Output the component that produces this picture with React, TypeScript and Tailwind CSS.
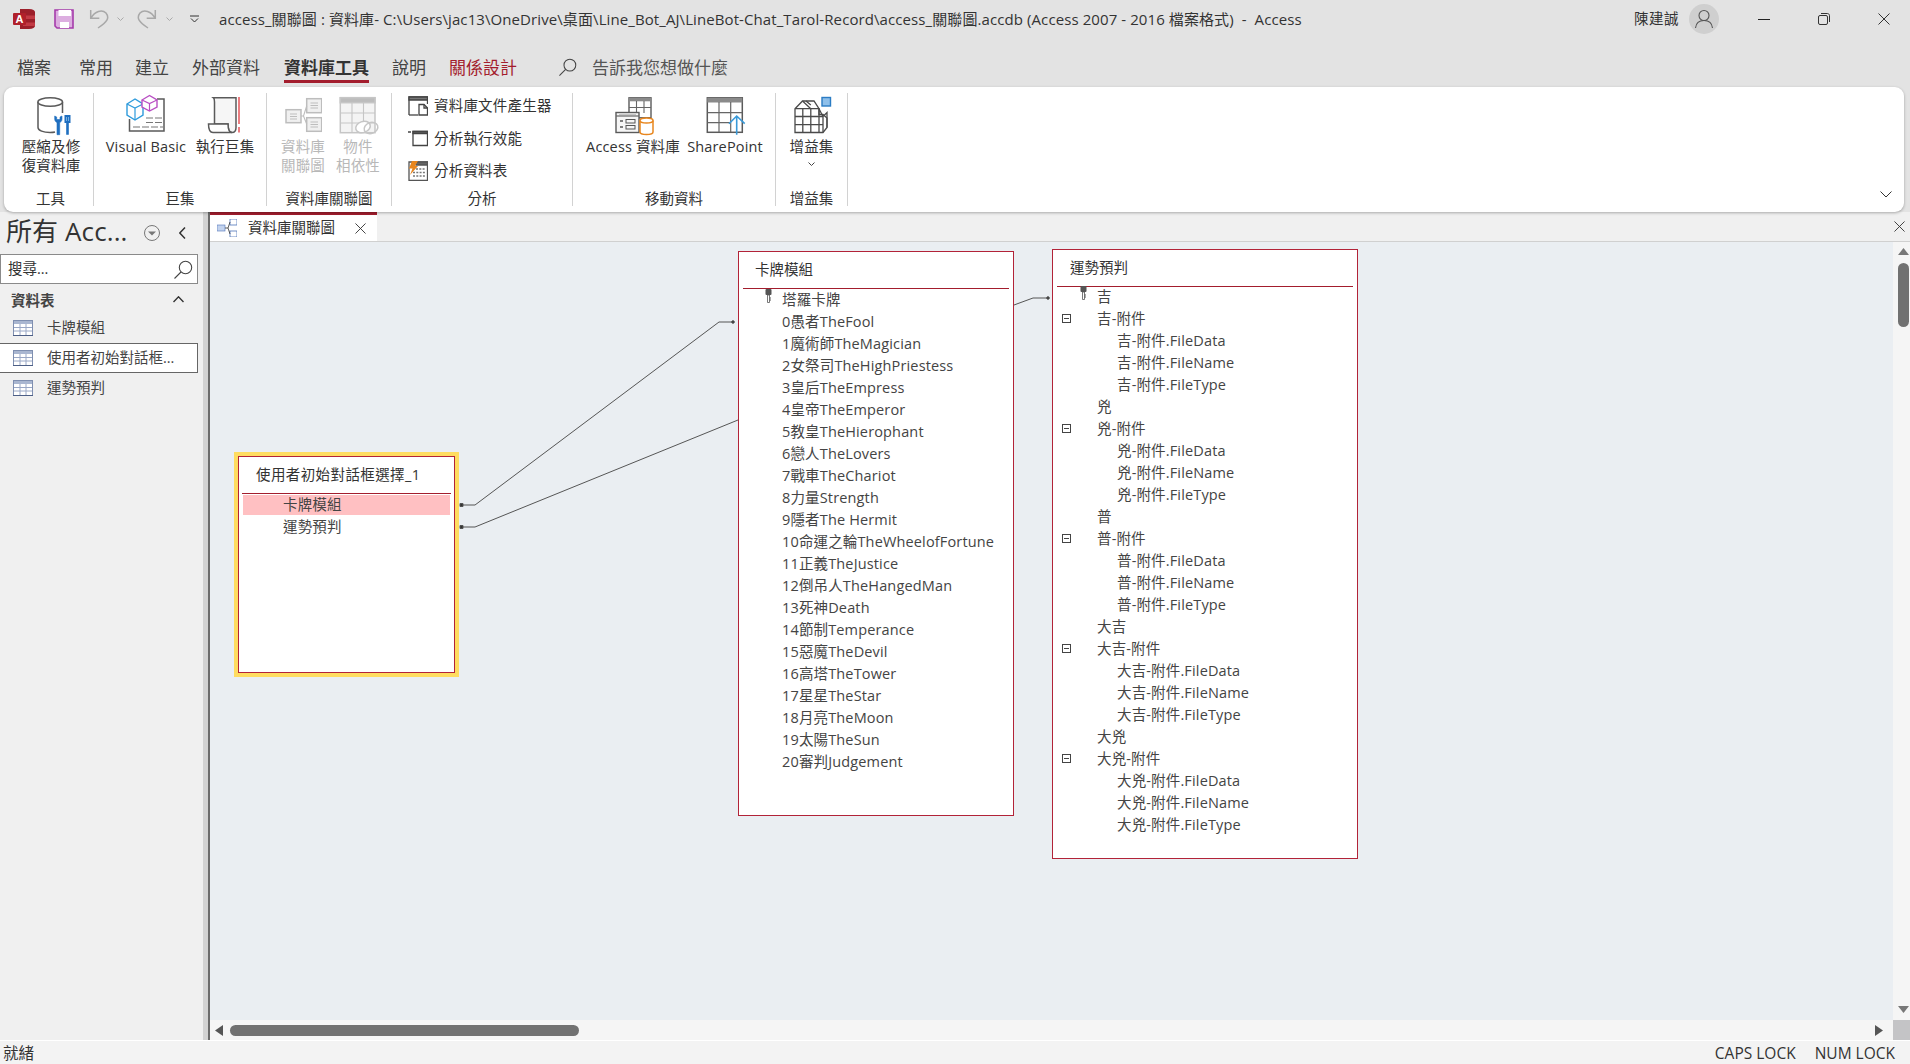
import React from "react";

const FONT = "font-['Open_Sans','Noto_Sans_CJK_TC',sans-serif]";

const cards = [
  "0愚者TheFool",
  "1魔術師TheMagician",
  "2女祭司TheHighPriestess",
  "3皇后TheEmpress",
  "4皇帝TheEmperor",
  "5教皇TheHierophant",
  "6戀人TheLovers",
  "7戰車TheChariot",
  "8力量Strength",
  "9隱者The Hermit",
  "10命運之輪TheWheelofFortune",
  "11正義TheJustice",
  "12倒吊人TheHangedMan",
  "13死神Death",
  "14節制Temperance",
  "15惡魔TheDevil",
  "16高塔TheTower",
  "17星星TheStar",
  "18月亮TheMoon",
  "19太陽TheSun",
  "20審判Judgement",
];

const fortunes = ["吉", "兇", "普", "大吉", "大兇"];

const X = ({ size = 12, color = "#333" }: { size?: number; color?: string }) => (
  <svg width={size} height={size} viewBox="0 0 12 12" fill="none" stroke={color} strokeWidth="1">
    <path d="M0.5 0.5 11.5 11.5M11.5 0.5 0.5 11.5" />
  </svg>
);

const Chevron = ({ d, w = 10, h = 6, color = "#444", sw = 1 }: { d: string; w?: number; h?: number; color?: string; sw?: number }) => (
  <svg width={w} height={h} viewBox={`0 0 ${w} ${h}`} fill="none" stroke={color} strokeWidth={sw}>
    <path d={d} />
  </svg>
);

const Search = ({ size = 20 }: { size?: number }) => (
  <svg width={size} height={size} viewBox="0 0 20 20" fill="none" stroke="#444" strokeWidth="1.1">
    <circle cx="12.5" cy="7.5" r="6.2" />
    <path d="M8 12 1.5 18.5" />
  </svg>
);

const TableIcon = () => (
  <svg width="20" height="16" viewBox="0 0 20 16">
    <rect x="0.5" y="0.5" width="19" height="15" fill="#fff" stroke="#7f8fb0" />
    <rect x="1" y="1" width="18" height="3" fill="#a9b6d0" />
    <path d="M1 7.5H19M1 11H19M7 4V15M13 4V15" stroke="#9aa8c6" fill="none" />
    <path d="M0 15.5H20" stroke="#4d5f86" />
  </svg>
);

const KeyIcon = () => (
  <svg width="7" height="14" viewBox="0 0 7 14">
    <rect x="0.5" y="0" width="6" height="6" rx="1" fill="#555" />
    <path d="M2.5 6V13.5H4.5V6Z" fill="#fff" stroke="#555" strokeWidth="0.8" />
    <path d="M4.5 9H6M4.5 11H6" stroke="#555" />
  </svg>
);

const MinusBox = () => (
  <svg width="9" height="9" viewBox="0 0 9 9" fill="none" stroke="#444">
    <rect x="0.5" y="0.5" width="8" height="8" />
    <path d="M2 4.5H7" />
  </svg>
);

const CompactIcon = () => (
  <svg width="40" height="40" viewBox="0 0 40 40" fill="none" overflow="visible">
    <path d="M7 5V30.500C7 33.500 12.500 35.500 19 35.500C21 35.500 23 35.300 24 35M31.500 5V16" stroke="#5a5a5a" strokeWidth="1.500" />
    <ellipse cx="19.200" cy="5" rx="12.300" ry="4.200" fill="#fff" stroke="#5a5a5a" strokeWidth="1.500" />
    <path d="M23.700 19V22C23.700 24 24.800 25 26 25.500V37.700H28.700V25.500C30 25 31 24 31 22V19L29 20V22.500H25.700V20Z" fill="#1f6fc0" stroke="#1f6fc0" strokeWidth="0.600" />
    <path d="M33.500 18H39.500V26H37.800V37.700H35.200V26H33.500Z" fill="#1f6fc0" />
    <path d="M35.500 20V24M37.500 20V24" stroke="#8cbfe8" strokeWidth="0.800" />
  </svg>
);

const VbIcon = () => (
  <svg width="44" height="40" viewBox="0 0 44 40" fill="none" overflow="visible">
    <path d="M5.500 22V34H40V2H33" stroke="#5a5a5a" strokeWidth="1.500" />
    <path d="M22 21H39M22 25.500H39M9 30H39" stroke="#777" strokeWidth="1.100" strokeDasharray="7 2" />
    <path d="M3 7 11 2 19 7V18L11 23 3 18Z" fill="#fff" stroke="#2e9bdc" strokeWidth="1.400" />
    <path d="M3 7 11 11 19 7M11 11V23" stroke="#2e9bdc" strokeWidth="1.200" />
    <path d="M18 3 25.500 -1.500 33 3V10L25.500 14 18 10Z" fill="#fff" stroke="#b94fc4" strokeWidth="1.400" />
    <path d="M18 3 25.500 6.500 33 3M25.500 6.500V14" stroke="#b94fc4" strokeWidth="1.200" />
  </svg>
);

const MacroIcon = () => (
  <svg width="36" height="40" viewBox="0 0 36 40" fill="none" stroke="#5a5a5a" strokeWidth="1.500" overflow="visible">
    <path d="M6.500 0.800H29V30.500C29 33.500 27.500 35.500 25 35.500C22.500 35.500 21 32.500 21 27H7.500V5C7.500 3 7.500 1.500 6.500 0.800Z" fill="#f6f6f6" />
    <path d="M1.500 27H21C21 32.500 22.500 35.500 25 35.500H6C3 35.500 1.500 33 1.500 27Z" fill="#fff" />
    <path d="M32 0V27M32 30V35.500" stroke="#e0393e" strokeWidth="1.300" />
  </svg>
);

const RelationIcon = () => (
  <svg width="38" height="36" viewBox="0 0 38 36" fill="none" stroke="#bdbdbd" strokeWidth="1.500">
    <rect x="2" y="12.700" width="15" height="13" fill="#f0f0f0" />
    <rect x="22.700" y="1.700" width="15" height="14" fill="#f0f0f0" />
    <rect x="22.700" y="20.700" width="15" height="13.600" fill="#f0f0f0" />
    <path d="M17 19H19.500L22.700 9M19.500 19 22.700 27M6 17H13M6 19.500H13M6 22H13M26.500 6H34M26.500 8.500H34M26.500 11H34M26.500 25H34M26.500 27.500H34M26.500 30H34" strokeWidth="1.100" />
  </svg>
);

const DependIcon = () => (
  <svg width="38" height="36" viewBox="0 0 38 36" fill="none" stroke="#c6c6c6" strokeWidth="1.500" overflow="visible">
    <rect x="1.300" y="0.700" width="34.700" height="35" fill="#f4f4f4" />
    <rect x="1.300" y="0.700" width="34.700" height="5" fill="#bcbcbc" />
    <path d="M13 5V35.700M24.500 5V35.700M1.300 16H36M1.300 26H36" strokeWidth="1.100" />
    <ellipse cx="24" cy="30" rx="7.500" ry="5.500" fill="#fff" transform="rotate(-20 24 30)" />
    <ellipse cx="32" cy="31" rx="7" ry="5.500" fill="none" transform="rotate(-20 32 31)" />
  </svg>
);

const AccessDbIcon = () => (
  <svg width="44" height="40" viewBox="0 0 44 40" fill="none" overflow="visible">
    <rect x="18" y="0.800" width="22" height="20" fill="#fff" stroke="#5a5a5a" strokeWidth="1.400" />
    <rect x="18" y="0.800" width="22" height="3.500" fill="#8a8a8a" />
    <path d="M25.500 4V16M33 4V16M18 10.500H40" stroke="#666" strokeWidth="1.100" />
    <rect x="5" y="15.500" width="23" height="20" fill="#f6f6f6" stroke="#5a5a5a" strokeWidth="1.400" />
    <path d="M5 19H28" stroke="#666" strokeWidth="1.200" />
    <path d="M8 18H25" stroke="#999" />
    <path d="M9 24H12M9 30H12" stroke="#555" strokeWidth="1.300" />
    <rect x="15" y="22.500" width="9" height="3.500" stroke="#555" />
    <rect x="15" y="28.500" width="9" height="3.500" stroke="#555" />
    <path d="M29 23.500V35C29 36.700 32 37.500 35.500 37.500S42 36.700 42 35V23.500" fill="#fff" stroke="#e8861e" strokeWidth="1.500" />
    <ellipse cx="35.500" cy="23.500" rx="6.500" ry="2.500" fill="#fff" stroke="#e8861e" strokeWidth="1.500" />
  </svg>
);

const SharePointIcon = () => (
  <svg width="38" height="40" viewBox="0 0 38 40" fill="none" overflow="visible">
    <rect x="1.300" y="0.800" width="35" height="34.500" fill="#fff" stroke="#5a5a5a" strokeWidth="1.500" />
    <rect x="1.300" y="0.800" width="35" height="4.700" fill="#8a8a8a" />
    <path d="M13 5V35M24.700 5V35M1.300 15.700H36M1.300 25.700H24" stroke="#666" strokeWidth="1.200" />
    <path d="M30.700 37.700V19M23 26.700 30.700 19 38.700 26.700" stroke="#3a9ad9" strokeWidth="1.600" fill="none" />
  </svg>
);

const AddinIcon = () => (
  <svg width="40" height="40" viewBox="0 0 40 40" fill="none" stroke="#4a4a4a" strokeWidth="1.300" overflow="visible">
    <rect x="30" y="0.500" width="8.500" height="8.500" fill="#8fc0ea" stroke="#2b7cc4" strokeWidth="1.400" />
    <path d="M3 11.700 10.500 4H22L27 11.700V17.500H31L35 21V30.500L31 35.500H3Z" fill="#fff" />
    <path d="M3 11.700H27V35.500M3 19.500H31V35.500M3 27.600H31M10.800 11.700V35.500M18.800 11.700V35.500M10.500 4 18.800 11.700M14 4 18.800 8M27 11.700 31 19.500M31 19.500 35 15.500V30.500" />
  </svg>
);

const DocGenIcon = () => (
  <svg width="20" height="20" viewBox="0 0 20 20" fill="none" stroke="#444" strokeWidth="1.300">
    <path d="M1 19V1H19.500V8" />
    <path d="M1 19H10" />
    <path d="M1 1H19.500V4H1Z" fill="#777" />
    <path d="M11 8.500H16L19.500 12V19H11Z" fill="#fff" />
    <path d="M16 8.500V12H19.500" />
  </svg>
);

const PerfIcon = () => (
  <svg width="20" height="20" viewBox="0 0 20 20" fill="none" stroke="#444" strokeWidth="1.300">
    <path d="M5 2.500H19.500V16.500H5Z" />
    <path d="M5 2.500H19.500V4.500H5Z" fill="#666" />
    <path d="M0 3H3" strokeWidth="1.500" />
  </svg>
);

const AnalyzeIcon = () => (
  <svg width="20" height="20" viewBox="0 0 20 20" fill="none" stroke="#555" strokeWidth="1.300">
    <path d="M1 1H19.500V19.500H1Z" fill="#fff" />
    <path d="M8 1H19.500V4H8Z" fill="#666" />
    <path d="M8 8H17.500M5 11.500H17.500M5 15H17.500" strokeWidth="1.600" strokeDasharray="2 1.300" stroke="#777" />
    <path d="M4 0H10L7 5H10L2 14 4.500 7.500H1Z" fill="#e8861e" stroke="none" />
  </svg>
);

const RelTabIcon = () => (
  <svg width="20" height="18" viewBox="0 0 20 18" fill="none">
    <rect x="0" y="6" width="8" height="6" fill="#c3d3ee" stroke="#4f74b8" strokeWidth="0.6" />
    <rect x="13" y="0" width="7" height="6" fill="#fff" stroke="#4f74b8" strokeWidth="0.8" />
    <rect x="13" y="12" width="7" height="6" fill="#fff" stroke="#4f74b8" strokeWidth="0.8" />
    <path d="M8 9H11L13 3M11 9 13 15" stroke="#333" strokeWidth="0.8" />
  </svg>
);

const BigButton = ({ icon, lines, w, muted }: { icon: React.ReactNode; lines: string[]; w: string; muted?: boolean }) => (
  <div className={`flex flex-col items-center ${w}`}>
    <div className="h-[40px] mt-[4px] flex items-start justify-center">{icon}</div>
    {lines.map((l) => (
      <div key={l} className={`whitespace-nowrap text-[14.5px] tracking-[0.15px] leading-[19px] ${muted ? "text-[#b8b8b8]" : "text-[#333]"}`}>
        {l}
      </div>
    ))}
  </div>
);

const SmallButton = ({ icon, label }: { icon: React.ReactNode; label: string }) => (
  <div className="flex items-center h-[26px]">
    <div className="w-[26px] flex items-center">{icon}</div>
    <span className="text-[14.5px] tracking-[0.2px] text-[#333] whitespace-nowrap">{label}</span>
  </div>
);

const Group = ({ label, w, pad, gap, lp, children }: { label: string; w: string; pad?: string; gap?: string; lp?: string; children: React.ReactNode }) => (
  <div className={`${w} h-full flex flex-col border-r border-[#d2d2d2]`}>
    <div className={`flex-1 flex ${pad ?? ""} ${gap ?? ""}`}>{children}</div>
    <div className={`h-[12px] mb-[1px] leading-[12px] text-center text-[14.5px] text-[#333] whitespace-nowrap ${lp ?? ""}`}>{label}</div>
  </div>
);

const Row = ({ text, indent, selected, minus, keyed, outer }: { text: string; indent: string; selected?: boolean; minus?: string; keyed?: string; outer?: string }) => (
  <div className={`relative h-[22px] py-[1px] ${outer ?? ""}`}>
    <div className={`h-[20px] leading-[20px] text-[14.500px] tracking-[0.15px] text-[#444] whitespace-nowrap ${indent} ${selected ? "bg-[#ffc0c2]" : ""}`}>
      {keyed && <div className={`absolute top-[0px] ${keyed}`}><KeyIcon /></div>}
      {minus && <div className={`absolute top-[6px] ${minus}`}><MinusBox /></div>}
      {text}
    </div>
  </div>
);

const Title = ({ text, pad }: { text: string; pad: string }) => (
  <div className={`h-[36px] flex items-center text-[14.500px] text-[#333] whitespace-nowrap ${pad}`}>{text}</div>
);

const Status = ({ children }: { children: React.ReactNode }) => <span className="text-[15.5px] text-[#333]">{children}</span>;

export default function App() {
  return (
    <div className={`w-[1910px] h-[1064px] overflow-hidden flex flex-col bg-[#e3e3e3] ${FONT}`}>
      {/* title bar */}
      <div className="h-[38px] flex items-center text-[#333] text-[15px]">
        <svg className="ml-[13px]" width="22" height="20" viewBox="0 0 22 20">
          <path d="M7 0H16C20 0 22 1.500 22 3V17C22 18.500 20 20 16 20H7Z" fill="#9c1f2a" />
          <path d="M10 6.500H22V10H10ZM10 13.500H22V17H10Z" fill="#c23a44" />
          <rect x="0" y="4" width="13" height="12" rx="1" fill="#b0202b" />
          <text x="2.500" y="14" fontSize="11" fontWeight="700" fill="#fff" fontFamily="Liberation Sans">A</text>
        </svg>
        <svg className="ml-[19px]" width="20" height="20" viewBox="0 0 20 20" fill="none">
          <path d="M1 1H19V19H3L1 17Z" fill="#dcaee0" stroke="#a53bab" strokeWidth="1.600" />
          <rect x="4.500" y="1" width="12.500" height="6" fill="#fff" />
          <rect x="6" y="13" width="9" height="6" fill="#fff" />
        </svg>
        <svg className="ml-[15px]" width="20" height="20" viewBox="0 0 20 20" fill="none" stroke="#a8a8a8" strokeWidth="1.500">
          <path d="M1.700 1V9.300H10.300M1.700 9.300C6 2 13 0 17 4C21 9 18 13 9 19" />
        </svg>
        <div className="ml-[8px]"><Chevron d="M0.500 0.500 3.500 3.500 6.500 0.500" w={7} h={4} color="#aaa" /></div>
        <svg className="ml-[13px]" width="20" height="20" viewBox="0 0 20 20" fill="none" stroke="#a8a8a8" strokeWidth="1.500">
          <path d="M18.300 1V9.300H9.700M18.300 9.300C14 2 7 0 3 4C-1 9 2 13 11 19" />
        </svg>
        <div className="ml-[9px]"><Chevron d="M0.500 0.500 3.500 3.500 6.500 0.500" w={7} h={4} color="#aaa" /></div>
        <svg className="ml-[17px]" width="9" height="9" viewBox="0 0 9 9" fill="none" stroke="#333">
          <path d="M0 1H9M1 3.500 4.500 7 8 3.500" />
        </svg>
        <div className="ml-[20px] whitespace-nowrap tracking-[0.09px]">
          access_關聯圖 : 資料庫- C:\Users\jac13\OneDrive\桌面\Line_Bot_AJ\LineBot-Chat_Tarol-Record\access_關聯圖.accdb (Access 2007 - 2016 檔案格式)&nbsp; -&nbsp; Access
        </div>
        <div className="ml-auto flex items-center">
          <span className="text-[14.500px] tracking-[0.5px]">陳建誠</span>
          <div className="ml-[10px] w-[30px] h-[30px] rounded-full bg-[#cfcfcf] flex items-center justify-center">
            <svg width="20" height="20" viewBox="0 0 20 20" fill="none" stroke="#555" strokeWidth="1.100">
              <circle cx="10" cy="6.500" r="5" />
              <path d="M1.500 19C2 14 5 11.500 10 11.500S18 14 18.500 19" />
            </svg>
          </div>
          <div className="ml-[39px] w-[12px] h-[1px] bg-[#222]" />
          <svg className="ml-[48px]" width="12" height="12" viewBox="0 0 12 12" fill="none" stroke="#333">
            <rect x="0.500" y="2.500" width="9" height="9" rx="1.500" />
            <path d="M3 0.500H9.500C10.500 0.500 11.500 1.500 11.500 2.500V9" />
          </svg>
          <div className="ml-[48px] mr-[20px]"><X /></div>
        </div>
      </div>

      {/* tabs */}
      <div className="h-[49px] flex text-[17px] text-[#444] pt-[18px] relative">
        <span className="ml-[17px] h-[24px] leading-[24px]">檔案</span>
        <span className="ml-[28px] h-[24px] leading-[24px]">常用</span>
        <span className="ml-[22px] h-[24px] leading-[24px]">建立</span>
        <span className="ml-[23px] h-[24px] leading-[24px]">外部資料</span>
        <span className="ml-[24px] h-[27px] leading-[24px] font-bold text-[#333] border-b-[3px] border-[#a31d2d]">資料庫工具</span>
        <span className="ml-[23px] h-[24px] leading-[24px]">說明</span>
        <span className="ml-[23px] h-[24px] leading-[24px] text-[#a31d2d]">關係設計</span>
        <span className="ml-[41px] mt-[2px]"><Search size={19} /></span>
        <span className="ml-[15px] h-[24px] leading-[24px] text-[#555]">告訴我您想做什麼</span>
      </div>

      {/* ribbon */}
      <div className="h-[125px] mx-[4px] mr-[6px] bg-white rounded-[9px] shadow-[0_1px_3px_rgba(0,0,0,0.3)] relative z-10 py-[6px] flex">
        <Group label="工具" w="w-[90px]" pad="pl-[15px]" lp="pl-[4px]">
          <BigButton icon={<CompactIcon />} lines={["壓縮及修", "復資料庫"]} w="w-[64px]" />
        </Group>
        <Group label="巨集" w="w-[173px]" pad="pl-[9px]" gap="gap-[4px]">
          <BigButton icon={<VbIcon />} lines={["Visual Basic"]} w="w-[86px]" />
          <BigButton icon={<MacroIcon />} lines={["執行巨集"]} w="w-[64px]" />
        </Group>
        <Group label="資料庫關聯圖" w="w-[125px]" pad="pl-[12px]" gap="gap-[7px]">
          <BigButton icon={<RelationIcon />} lines={["資料庫", "關聯圖"]} w="w-[48px]" muted />
          <BigButton icon={<DependIcon />} lines={["物件", "相依性"]} w="w-[48px]" muted />
        </Group>
        <Group label="分析" w="w-[181px]" pad="pl-[16px]">
          <div className="flex flex-col gap-[6.500px]">
            <SmallButton icon={<DocGenIcon />} label="資料庫文件產生器" />
            <SmallButton icon={<PerfIcon />} label="分析執行效能" />
            <SmallButton icon={<AnalyzeIcon />} label="分析資料表" />
          </div>
        </Group>
        <Group label="移動資料" w="w-[203px]" pad="pl-[12px]" gap="gap-[4px]">
          <BigButton icon={<AccessDbIcon />} lines={["Access 資料庫"]} w="w-[96px]" />
          <BigButton icon={<SharePointIcon />} lines={["SharePoint"]} w="w-[80px]" />
        </Group>
        <Group label="增益集" w="w-[72px]">
          <div className="w-full flex flex-col items-center">
            <BigButton icon={<AddinIcon />} lines={["增益集"]} w="w-[72px]" />
            <div className="mt-[6px]"><Chevron d="M0.500 0.500 3.500 3.500 6.500 0.500" w={7} h={4} color="#444" /></div>
          </div>
        </Group>
        <div className="absolute right-[12px] bottom-[14px]">
          <Chevron d="M0.500 0.500 6 6 11.500 0.500" w={12} h={7} color="#333" />
        </div>
      </div>

      {/* main */}
      <div className="h-[828px] flex bg-[#f0f0f0]">
        {/* nav pane */}
        <div className="w-[203px] flex flex-col">
          <div className="h-[42px] flex items-center text-[#333]">
            <span className="ml-[6px] -mt-[4px] text-[26px] tracking-[0.1px] whitespace-nowrap">所有 Acc...</span>
            <svg className="ml-auto" width="16" height="16" viewBox="0 0 16 16">
              <circle cx="8" cy="8" r="7.500" fill="none" stroke="#777" />
              <path d="M4 6.500H12L8 10.500Z" fill="#777" />
            </svg>
            <div className="ml-[19px] mr-[17px]"><Chevron d="M6 0.500 0.800 6 6 11.500" w={7} h={12} color="#333" sw={1.500} /></div>
          </div>
          <div className="h-[30px] w-[198px] bg-white border border-[#8a8a8a] flex items-center pl-[7px] text-[14.500px] text-[#333]">
            搜尋...
            <span className="ml-auto mr-[4px] mt-[1px]"><Search size={20} /></span>
          </div>
          <div className="h-[26px] mt-[3px] pt-[1px] flex items-center pl-[11px] w-[198px] text-[14.500px] font-bold text-[#444]">
            資料表
            <span className="ml-auto mr-[14px] mb-[2px]"><Chevron d="M0.500 6 5.500 0.800 10.500 6" w={11} h={7} color="#333" sw={1.400} /></span>
          </div>
          <div className="h-[30px] w-[198px] flex items-center pl-[13px] text-[14.500px] text-[#444]">
            <TableIcon />
            <span className="ml-[14px]">卡牌模組</span>
          </div>
          <div className="h-[30px] w-[198px] bg-white border border-l-0 border-[#666] flex items-center pl-[13px] text-[14.500px] text-[#444]">
            <TableIcon />
            <span className="ml-[14px] whitespace-nowrap">使用者初始對話框...</span>
          </div>
          <div className="h-[30px] w-[198px] flex items-center pl-[13px] text-[14.500px] text-[#444]">
            <TableIcon />
            <span className="ml-[14px]">運勢預判</span>
          </div>
        </div>
        <div className="w-[5px] bg-[#d2d2d2]" />
        <div className="w-[2px] bg-[#6b6b6b]" />

        {/* document area */}
        <div className="flex-1 min-w-0 flex flex-col">
          <div className="h-[30px] border-b border-[#d0d0d0] flex items-stretch">
            <div className="w-[167px] h-[29px] bg-white border-t-[3px] border-[#a31d2d] flex items-center pl-[7px] text-[14.500px] text-[#333]">
              <RelTabIcon />
              <span className="ml-[11px]">資料庫關聯圖</span>
              <span className="ml-auto mr-[11px]"><X size={11} /></span>
            </div>
            <div className="ml-auto mr-[5px] self-center"><X size={11} /></div>
          </div>
          <div className="flex-1 min-h-0 flex">
            <div className="flex-1 relative bg-[#eaeef2] overflow-hidden">
              <svg className="absolute inset-0" width="1685" height="778" fill="none" stroke="#555">
                <path d="M250 263H265L509 80H523" />
                <path d="M250 285H265L528 178" />
                <path d="M804 63 823 56H838" />
                <path d="M250 261.500H253V264.500H250Z M250 283.500H253V286.500H250Z" fill="#333" />
                <circle cx="523" cy="80" r="1.300" fill="#333" />
                <circle cx="838" cy="56" r="1.300" fill="#333" />
              </svg>

              {/* selected table */}
              <div className="absolute left-[24px] top-[210px] w-[225px] h-[225px] bg-white border-[4px] border-[#ffdc60] outline outline-1 -outline-offset-5 outline-[#b22338] px-[4px] pt-[1px]">
                <div className="h-[36px] flex items-center pl-[14px] text-[14.500px] tracking-[0.4px] text-[#333] whitespace-nowrap">使用者初始對話框選擇_1</div>
                <div className="h-[1px] bg-[#a31d2d]" />
                <Row text="卡牌模組" indent="pl-[40px]" outer="mx-[1px]" selected />
                <Row text="運勢預判" indent="pl-[41px]" />
              </div>

              {/* card table */}
              <div className="absolute left-[528px] top-[9px] w-[276px] h-[565px] bg-white border border-[#b22338] px-[4px]">
                <Title text="卡牌模組" pad="pl-[12px]" />
                <div className="h-[1px] bg-[#a31d2d]" />
                <Row text="塔羅卡牌" indent="pl-[39px]" keyed="left-[22px]" />
                {cards.map((c) => (
                  <Row key={c} text={c} indent="pl-[39px]" />
                ))}
              </div>

              {/* fortune table */}
              <div className="absolute left-[842px] top-[7px] w-[306px] h-[610px] bg-white border border-[#b22338] px-[4px]">
                <Title text="運勢預判" pad="pl-[13px]" />
                <div className="h-[1px] bg-[#a31d2d] -mb-[1px]" />
                {fortunes.map((f, i) => (
                  <React.Fragment key={f}>
                    <Row text={f} indent="pl-[40px]" keyed={i === 0 ? "left-[23px]" : undefined} />
                    <Row text={`${f}-附件`} indent="pl-[40px]" minus="left-[5px]" />
                    <Row text={`${f}-附件.FileData`} indent="pl-[60px]" />
                    <Row text={`${f}-附件.FileName`} indent="pl-[60px]" />
                    <Row text={`${f}-附件.FileType`} indent="pl-[60px]" />
                  </React.Fragment>
                ))}
              </div>
            </div>

            {/* vertical scrollbar */}
            <div className="w-[17px] bg-[#f5f5f5] flex flex-col items-center pl-[3px]">
              <svg className="mt-[6px]" width="11" height="7" viewBox="0 0 11 7"><path d="M0 7 5.500 0 11 7Z" fill="#777" /></svg>
              <div className="mt-[8px] w-[11px] h-[64px] rounded-[6px] bg-[#717171]" />
              <svg className="mt-auto mb-[7px]" width="11" height="7" viewBox="0 0 11 7"><path d="M0 0H11L5.500 7Z" fill="#777" /></svg>
            </div>
          </div>
          {/* horizontal scrollbar */}
          <div className="h-[20px] bg-[#f5f5f5] flex items-center">
            <svg className="ml-[5px]" width="8" height="11" viewBox="0 0 8 11"><path d="M8 0V11L0 5.500Z" fill="#555" /></svg>
            <div className="ml-[7px] w-[349px] h-[11px] rounded-[6px] bg-[#717171]" />
            <svg className="ml-auto mr-[10px]" width="8" height="11" viewBox="0 0 8 11"><path d="M0 0V11L8 5.500Z" fill="#555" /></svg>
            <div className="w-[17px] h-[20px] bg-[#c4c4c6]" />
          </div>
        </div>
      </div>

      {/* status bar */}
      <div className="h-[24px] border-t border-white bg-[#f3f3f3] flex items-center pl-[3px] pr-[15px] pt-[2px]">
        <Status>就緒</Status>
        <div className="ml-auto flex gap-[19px]">
          <Status>CAPS LOCK</Status>
          <Status>NUM LOCK</Status>
        </div>
      </div>
    </div>
  );
}
